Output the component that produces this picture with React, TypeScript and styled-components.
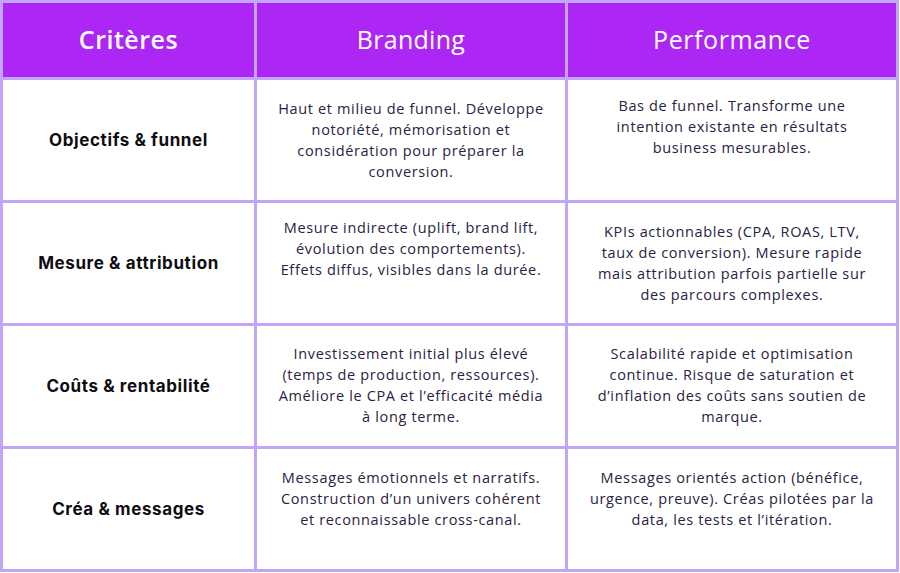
import React from "react";
import styled, { createGlobalStyle } from "styled-components";

const Global = createGlobalStyle`
  html, body { margin: 0; padding: 0; background: #ffffff; }
  body { font-family: "Open Sans", "Liberation Sans", sans-serif; }
`;

const Table = styled.div`
  width: 899px;
  box-sizing: border-box;
  display: grid;
  grid-template-columns: 251px 308px 328px;
  grid-template-rows: 74px repeat(4, 120px);
  gap: 3px;
  padding: 3px;
  background: #c2a4fb;
`;

const HeadCell = styled.div<{ $weight: number; $spacing: number }>`
  background: #ad27f4;
  color: #ffffff;
  display: flex;
  align-items: center;
  justify-content: center;
  padding-bottom: 2px;
  font-family: "Open Sans", sans-serif;
  font-size: 25px;
  font-weight: ${(p) => p.$weight};
  letter-spacing: ${(p) => p.$spacing}px;
`;

const LabelCell = styled.div`
  background: #ffffff;
  display: flex;
  align-items: center;
  justify-content: center;
  font-family: "Inter", sans-serif;
  font-weight: 700;
  font-size: 17px;
  letter-spacing: 0.6px;
  color: #0d0d12;
`;

const TextCell = styled.div<{ $top: number }>`
  background: #ffffff;
  box-sizing: border-box;
  padding: ${(p) => p.$top}px 8px 0;
  text-align: center;
  font-family: "Open Sans", sans-serif;
  font-size: 14.5px;
  letter-spacing: 0.65px;
  line-height: 21px;
  color: #2a2242;
`;

type Row = { label: string; branding: string[]; perf: string[]; bTop: number; pTop: number };

const rows: Row[] = [
  {
    label: "Objectifs & funnel",
    branding: [
      "Haut et milieu de funnel. Développe",
      "notoriété, mémorisation et",
      "considération pour préparer la",
      "conversion.",
    ],
    perf: [
      "Bas de funnel. Transforme une",
      "intention existante en résultats",
      "business mesurables.",
    ],
    bTop: 18,
    pTop: 15,
  },
  {
    label: "Mesure & attribution",
    branding: [
      "Mesure indirecte (uplift, brand lift,",
      "évolution des comportements).",
      "Effets diffus, visibles dans la durée.",
    ],
    perf: [
      "KPIs actionnables (CPA, ROAS, LTV,",
      "taux de conversion). Mesure rapide",
      "mais attribution parfois partielle sur",
      "des parcours complexes.",
    ],
    bTop: 14,
    pTop: 18,
  },
  {
    label: "Coûts & rentabilité",
    branding: [
      "Investissement initial plus élevé",
      "(temps de production, ressources).",
      "Améliore le CPA et l’efficacité média",
      "à long terme.",
    ],
    perf: [
      "Scalabilité rapide et optimisation",
      "continue. Risque de saturation et",
      "d’inflation des coûts sans soutien de",
      "marque.",
    ],
    bTop: 17,
    pTop: 17,
  },
  {
    label: "Créa & messages",
    branding: [
      "Messages émotionnels et narratifs.",
      "Construction d’un univers cohérent",
      "et reconnaissable cross-canal.",
    ],
    perf: [
      "Messages orientés action (bénéfice,",
      "urgence, preuve). Créas pilotées par la",
      "data, les tests et l’itération.",
    ],
    bTop: 18,
    pTop: 18,
  },
];

const Line = styled.div`
  white-space: nowrap;
`;

export default function App() {
  return (
    <>
      <Global />
      <Table>
        <HeadCell $weight={600} $spacing={0.5}>Critères</HeadCell>
        <HeadCell $weight={400} $spacing={0.3}>Branding</HeadCell>
        <HeadCell $weight={400} $spacing={0.6}>Performance</HeadCell>
        {rows.map((r) => (
          <React.Fragment key={r.label}>
            <LabelCell>{r.label}</LabelCell>
            <TextCell $top={r.bTop}>
              {r.branding.map((l) => (
                <Line key={l}>{l}</Line>
              ))}
            </TextCell>
            <TextCell $top={r.pTop}>
              {r.perf.map((l) => (
                <Line key={l}>{l}</Line>
              ))}
            </TextCell>
          </React.Fragment>
        ))}
      </Table>
    </>
  );
}
